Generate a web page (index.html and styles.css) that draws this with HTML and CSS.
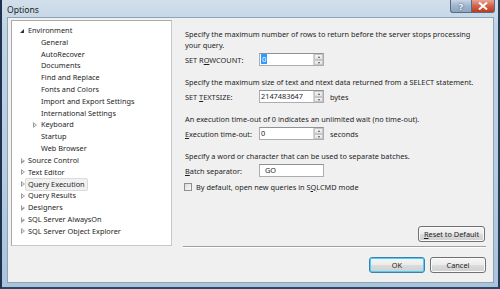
FILE: index.html
```html
<!DOCTYPE html>
<html lang="en">
  <head>
    <meta charset="UTF-8" />
    <title>Options</title>
    <link rel="stylesheet" href="styles.css">
  </head>
  <body>
    <div class="window">
      <div class="titlebar">
        <span class="title">Options</span>
        <div class="caption">
          <span class="cap-btn help">?</span>
          <span class="cap-btn close">
            <svg width="10" height="8" viewBox="0 0 10 8"><path d="M1 0.5 L9 7.5 M9 0.5 L1 7.5" stroke="#fff" stroke-width="2"/></svg>
          </span>
        </div>
      </div>
      <div class="client">
        <div class="main">
          <ul class="tree">
            <li class="node open"><i class="exp"></i>Environment</li>
            <li class="child">General</li>
            <li class="child">AutoRecover</li>
            <li class="child">Documents</li>
            <li class="child">Find and Replace</li>
            <li class="child">Fonts and Colors</li>
            <li class="child">Import and Export Settings</li>
            <li class="child">International Settings</li>
            <li class="child sub"><i class="col"></i>Keyboard</li>
            <li class="child">Startup</li>
            <li class="child">Web Browser</li>
            <li class="node"><i class="col"></i>Source Control</li>
            <li class="node"><i class="col"></i>Text Editor</li>
            <li class="node"><i class="col"></i><span class="selected">Query Execution</span></li>
            <li class="node"><i class="col"></i>Query Results</li>
            <li class="node"><i class="col"></i>Designers</li>
            <li class="node"><i class="col"></i>SQL Server AlwaysOn</li>
            <li class="node"><i class="col"></i>SQL Server Object Explorer</li>
          </ul>
          <div class="pane">
            <p class="desc first">Specify the maximum number of rows to return before the server stops processing your query.</p>
            <div class="field">
              <label>SET R<u>O</u>WCOUNT:</label>
              <div class="input spin"><span class="val"><span class="sel">0</span></span><span class="spinner"><b class="up"></b><b class="down"></b></span></div>
            </div>
            <p class="desc">Specify the maximum size of text and ntext data returned from a SELECT statement.</p>
            <div class="field">
              <label>SET <u>T</u>EXTSIZE:</label>
              <div class="input spin"><span class="val">2147483647</span><span class="spinner"><b class="up"></b><b class="down"></b></span></div>
              <span class="unit">bytes</span>
            </div>
            <p class="desc">An execution time-out of 0 indicates an unlimited wait (no time-out).</p>
            <div class="field">
              <label><u>E</u>xecution time-out:</label>
              <div class="input spin"><span class="val">0</span><span class="spinner"><b class="up"></b><b class="down"></b></span></div>
              <span class="unit">seconds</span>
            </div>
            <p class="desc">Specify a word or character that can be used to separate batches.</p>
            <div class="field">
              <label><u>B</u>atch separator:</label>
              <div class="input"><span class="val pad">GO</span></div>
            </div>
            <div class="check">
              <span class="box"></span>
              <span>By default, open new queries in S<u>Q</u>LCMD mode</span>
            </div>
            <div class="reset-row">
              <button class="btn reset"><u>R</u>eset to Default</button>
            </div>
          </div>
        </div>
        <div class="footer">
          <div class="sep"></div>
          <div class="actions">
            <button class="btn default">OK</button>
            <button class="btn">Cancel</button>
          </div>
        </div>
      </div>
    </div>
  </body>
</html>
```

FILE: styles.css
```css
* {
  margin: 0;
  padding: 0;
  box-sizing: border-box;
}

body {
  width: 500px;
  height: 289px;
  overflow: hidden;
  font-family: "Noto Sans", "Open Sans", sans-serif;
  font-size: 7.35px;
  color: #1e1e1e;
  background: #dfe8f0;
}

.window {
  width: 500px;
  height: 289px;
  display: flex;
  flex-direction: column;
  padding: 0 4px 4px 5px;
  background: linear-gradient(180deg, #d2dfeb 0%, #bfd3e4 10%, #b7cde0 60%, #a9c4dc 100%);
  border-left: 2px solid #1f3350;
  border-right: 2px solid #2a3d58;
  border-bottom: 2px solid #2c4766;
}

.titlebar {
  height: 20px;
  display: flex;
  justify-content: space-between;
  align-items: flex-start;
}

.title {
  margin-top: 4px;
  font-size: 8.6px;
  color: #1c1c1c;
}

.caption {
  display: flex;
  margin-right: -1px;
}

.cap-btn {
  height: 13px;
  display: flex;
  align-items: center;
  justify-content: center;
  border: 1px solid #5a6a80;
  border-top: none;
  font-size: 9px;
  font-weight: bold;
  color: #fff;
}

.help {
  width: 21px;
  border-radius: 0 0 0 3px;
  border-right: none;
  background: linear-gradient(180deg, #c7d6e6 0%, #9fb4cc 50%, #8ea6c2 100%);
  text-shadow: 0 0 2px #2a3d58;
}

.close {
  width: 24px;
  border-radius: 0 0 3px 0;
  background: linear-gradient(180deg, #e8a493 0%, #d0624b 50%, #c0391e 100%);
}

.client {
  flex: 1;
  display: flex;
  flex-direction: column;
  background: #f0f0f0;
  border: 1px solid #8ea2b8;
}

.main {
  flex: 1;
  display: flex;
}

.tree {
  list-style: none;
  flex-shrink: 0;
  width: 161px;
  height: 226px;
  margin: 2px 0 0 3px;
  padding: 4px 0 0 0;
  background: #fff;
  border: 1px solid #aaa;
  border-right-color: #c8c8c8;
  border-bottom-color: #c8c8c8;
}

.tree li {
  height: 11.8px;
  line-height: 11.8px;
  display: flex;
  align-items: center;
  white-space: nowrap;
}

.tree .node {
  padding-left: 6px;
}

.tree .child {
  padding-left: 29px;
}

.tree .sub {
  padding-left: 18px;
}

.tree i {
  width: 10px;
  height: 8px;
  display: inline-block;
  position: relative;
}

.tree .sub i {
  margin-right: 1px;
}

.tree i.exp::before {
  content: "";
  position: absolute;
  left: 2px;
  top: 2px;
  border-style: solid;
  border-width: 0 0 4px 4px;
  border-color: transparent transparent #333 transparent;
}

.tree i.col::before {
  content: "";
  position: absolute;
  left: 3px;
  top: 1px;
  border-style: solid;
  border-width: 3px 0 3px 4px;
  border-color: transparent transparent transparent #9a9a9a;
}

.tree i.col::after {
  content: "";
  position: absolute;
  left: 4px;
  top: 2.5px;
  border-style: solid;
  border-width: 1.5px 0 1.5px 2px;
  border-color: transparent transparent transparent #fff;
}

.selected {
  margin-left: -3px;
  padding: 0 2px;
  line-height: 11px;
  background: #f1f1f1;
  border: 1px solid #dadada;
  border-radius: 2px;
}

.pane {
  flex: 1;
  display: flex;
  flex-direction: column;
  padding: 9px 8px 0 13px;
}

.desc {
  line-height: 11px;
  margin-top: 11px;
  margin-bottom: 2px;
  white-space: nowrap;
}

.desc.first {
  margin-top: 2px;
  white-space: normal;
  width: 290px;
}

.field {
  display: flex;
  align-items: center;
  height: 13px;
}

.field label {
  flex-shrink: 0;
  width: 74px;
}

.input {
  flex-shrink: 0;
  width: 65px;
  height: 13px;
  background: #fff;
  border: 1px solid #abadb3;
  border-top-color: #8e9196;
  display: flex;
  justify-content: space-between;
  line-height: 10px;
}

.val {
  padding-left: 1px;
}

.val.pad {
  padding-left: 5px;
}

.sel {
  background: #3399ff;
  color: #fff;
  padding: 0 1px;
}

.spinner {
  width: 10px;
  display: flex;
  flex-direction: column;
  border-left: 1px solid #d5d5d5;
}

.spinner b {
  flex: 1;
  position: relative;
  background: linear-gradient(180deg, #f4f4f4, #e2e2e2);
  border: 1px solid #c6c6c6;
}

.spinner b::after {
  content: "";
  position: absolute;
  left: 2.5px;
  top: 1px;
  border-style: solid;
  border-color: transparent;
}

.spinner .up::after {
  border-width: 0 1.5px 2px 1.5px;
  border-bottom-color: #555;
}

.spinner .down::after {
  border-width: 2px 1.5px 0 1.5px;
  border-top-color: #555;
}

.unit {
  margin-left: 6px;
}

.check {
  display: flex;
  align-items: center;
  margin-top: 4px;
  margin-left: -1px;
  height: 11px;
}

.check .box {
  width: 8px;
  height: 8px;
  margin-right: 4px;
  border: 1px solid #8f8f8f;
  background: linear-gradient(135deg, #dcdcdc, #f8f8f8);
}

.reset-row {
  flex: 1;
  display: flex;
  justify-content: flex-end;
  align-items: flex-end;
  padding-bottom: 4px;
}

.btn {
  font-family: inherit;
  font-size: 7.35px;
  color: #1e1e1e;
  height: 16px;
  border: 1px solid #707070;
  border-radius: 3px;
  background: linear-gradient(180deg, #f6f6f6 0%, #ebebeb 50%, #dcdcdc 51%, #cfcfcf 100%);
  box-shadow: inset 0 0 0 1px #fbfbfb;
}

.btn.reset {
  width: 67px;
}

.footer {
  padding: 0 7px 9px 175px;
}

.sep {
  height: 2px;
  border-top: 1px solid #a0a0a0;
  border-bottom: 1px solid #fff;
}

.actions {
  display: flex;
  justify-content: flex-end;
  gap: 5px;
  margin-top: 9px;
}

.actions .btn {
  width: 56px;
}

.btn.default {
  border-color: #3c7fb1;
  box-shadow: inset 0 0 0 1px #48d0f9;
}
```
